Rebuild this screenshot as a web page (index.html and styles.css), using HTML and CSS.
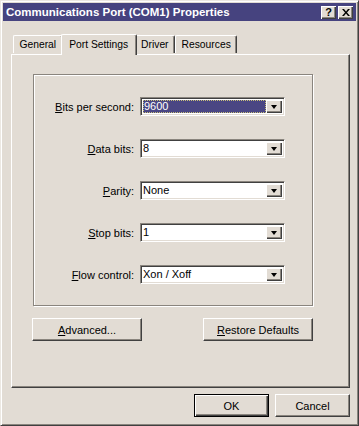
FILE: index.html
```html
<!DOCTYPE html>
<html>
<head>
<meta charset="utf-8">
<link rel="stylesheet" href="styles.css">
</head>
<body>
<div class="dialog">
  <div class="titlebar">
    <span class="title">Communications Port (COM1) Properties</span>
    <span class="tbtns">
      <span class="tbtn help">?</span>
      <span class="tbtn close">
        <svg width="8" height="7" viewBox="0 0 8 7"><path d="M0 0h2l2 2.5L6 0h2L5 3.5 8 7H6L4 4.5 2 7H0l3-3.5z" fill="#000"/></svg>
      </span>
    </span>
  </div>
  <div class="tabs">
    <div class="tab">General</div>
    <div class="tab active">Port Settings</div>
    <div class="tab">Driver</div>
    <div class="tab">Resources</div>
  </div>
  <div class="panel">
    <div class="group">
      <div class="row">
        <label class="lbl"><u>B</u>its per second:</label>
        <div class="combo selected"><span class="val"><span class="focus">9600</span></span><span class="drop"><i></i></span></div>
      </div>
      <div class="row">
        <label class="lbl"><u>D</u>ata bits:</label>
        <div class="combo"><span class="val">8</span><span class="drop"><i></i></span></div>
      </div>
      <div class="row">
        <label class="lbl"><u>P</u>arity:</label>
        <div class="combo"><span class="val">None</span><span class="drop"><i></i></span></div>
      </div>
      <div class="row">
        <label class="lbl"><u>S</u>top bits:</label>
        <div class="combo"><span class="val">1</span><span class="drop"><i></i></span></div>
      </div>
      <div class="row">
        <label class="lbl"><u>F</u>low control:</label>
        <div class="combo"><span class="val">Xon / Xoff</span><span class="drop"><i></i></span></div>
      </div>
    </div>
    <div class="panel-buttons">
      <button class="btn wide"><u>A</u>dvanced...</button>
      <button class="btn wide"><u>R</u>estore Defaults</button>
    </div>
  </div>
  <div class="footer">
    <button class="btn small default">OK</button>
    <button class="btn small">Cancel</button>
  </div>
</div>
</body>
</html>
```

FILE: styles.css
```css
* { box-sizing: border-box; }
html, body { margin: 0; padding: 0; background: #e2dcd4; }
body { font-family: "Liberation Sans", Arial, sans-serif; font-size: 11px; color: #000; }

.dialog {
  width: 359px;
  height: 426px;
  background: #e2dcd4;
  border-top: 1px solid #ece8e2;
  border-left: 1px solid #ece8e2;
  border-right: 1px solid #404040;
  border-bottom: 1px solid #404040;
  box-shadow: inset 1px 1px 0 #ffffff, inset -1px -1px 0 #8a857e;
  padding: 2px;
  display: flex;
  flex-direction: column;
}

.titlebar {
  height: 18px;
  background: #46437f;
  color: #fff;
  display: flex;
  align-items: center;
  justify-content: space-between;
  padding: 0 3px 0 3px;
}
.title { font-weight: bold; font-size: 11.5px; }
.tbtns { display: flex; gap: 2px; }
.tbtn {
  width: 15px; height: 13px;
  background: #e2dcd4;
  color: #000;
  display: flex; align-items: center; justify-content: center;
  font-weight: bold; font-size: 11px;
  box-shadow: inset 1px 1px 0 #fff, inset -1px -1px 0 #404040, inset -2px -2px 0 #8a857e;
}

.tabs {
  display: flex;
  align-items: flex-end;
  height: 24px;
  margin: 9px 0 0 10px;
  position: relative;
  z-index: 1;
  font-size: 10.3px;
}
.tab {
  height: 18px;
  padding: 3px 5.5px 0 5.5px;
  border-top: 1px solid #fff;
  border-left: 1px solid #fff;
  border-right: 1px solid #404040;
  box-shadow: inset -1px 0 0 #8a857e;
  border-radius: 2px 2px 0 0;
  background: #e2dcd4;
  margin-bottom: 1px;
}
.tab.active {
  height: 21px;
  margin: 0 -2px -1px -2px;
  padding: 4px 7.5px 0 7.5px;
  position: relative;
  z-index: 2;
}

.panel {
  margin: 0 6px 0 8px;
  height: 334px;
  border-top: 1px solid #fff;
  border-left: 1px solid #fff;
  border-right: 1px solid #404040;
  border-bottom: 1px solid #404040;
  box-shadow: inset -1px -1px 0 #8a857e;
  padding: 19px 36px 0 21px;
  display: flex;
  flex-direction: column;
}

.group {
  height: 232px;
  border: 1px solid #8a857e;
  box-shadow: inset 1px 1px 0 #fff, 1px 1px 0 #fff;
  padding: 22px 0 0 0;
  display: flex;
  flex-direction: column;
  gap: 23px;
}
.row {
  display: flex;
  align-items: center;
  height: 19px;
}
.lbl {
  width: 106px;
  text-align: right;
  padding-right: 6px;
}
.combo {
  width: 145px;
  height: 19px;
  background: #fff;
  border-top: 1px solid #8a857e;
  border-left: 1px solid #8a857e;
  border-right: 1px solid #fff;
  border-bottom: 1px solid #fff;
  box-shadow: inset 1px 1px 0 #404040, inset -1px -1px 0 #e2dcd4;
  display: flex;
  padding: 2px;
}
.val {
  flex: 1;
  padding-left: 0;
  line-height: 13px;
  display: flex;
  align-items: center;
}
.combo.selected .val {
  background: #4a4683;
  color: #fff;
  outline: 1px dotted #c9c07a;
  outline-offset: -1px;
}
.focus { padding-left: 1px; }
.drop {
  width: 16px;
  background: #e2dcd4;
  box-shadow: inset 1px 1px 0 #fff, inset -1px -1px 0 #404040, inset -2px -2px 0 #8a857e;
  display: flex;
  align-items: center;
  justify-content: center;
}
.drop i {
  width: 0; height: 0;
  border-left: 3.5px solid transparent;
  border-right: 3.5px solid transparent;
  border-top: 4px solid #000;
  margin-right: 1px;
}

.panel-buttons {
  display: flex;
  justify-content: space-between;
  margin-top: 12px;
  margin-left: -1px;
}
.btn {
  font-family: "Liberation Sans", Arial, sans-serif;
  font-size: 11px;
  color: #000;
  background: #e2dcd4;
  border-top: 1px solid #fff;
  border-left: 1px solid #fff;
  border-right: 1px solid #404040;
  border-bottom: 1px solid #404040;
  box-shadow: inset -1px -1px 0 #8a857e;
  height: 23px;
  padding: 0;
}
.btn.wide { width: 110px; }
.btn.small { width: 75px; }
.btn.default {
  border: 1px solid #000;
  box-shadow: inset 1px 1px 0 #fff, inset -1px -1px 0 #404040, inset -2px -2px 0 #8a857e;
}

.footer {
  display: flex;
  justify-content: flex-end;
  gap: 6px;
  margin: 6px 6px 0 0;
}
```
